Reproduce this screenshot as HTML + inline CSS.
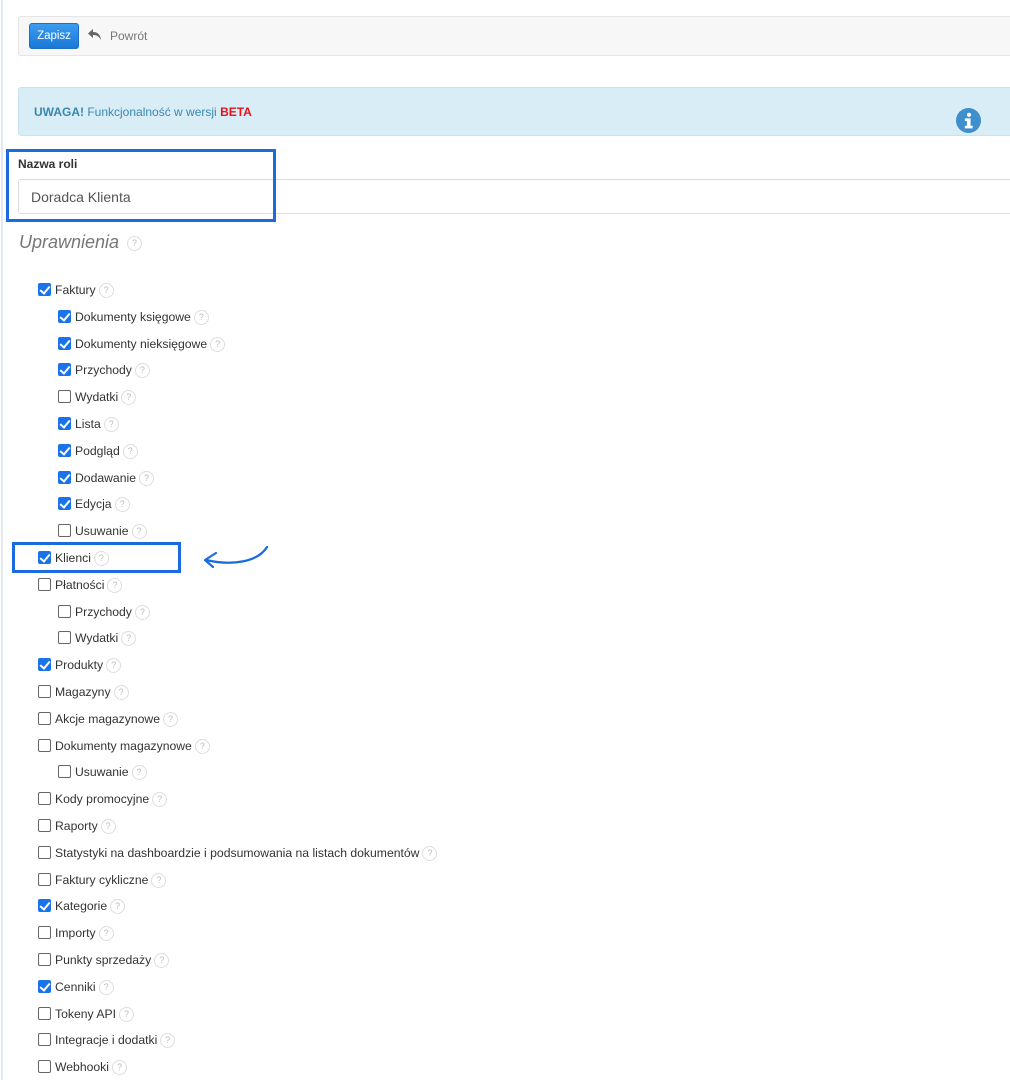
<!DOCTYPE html>
<html><head><meta charset="utf-8"><style>
*{box-sizing:border-box;margin:0;padding:0}
body{width:1010px;height:1080px;background:#fff;position:relative;overflow:hidden;font-family:"Liberation Sans",Arial,sans-serif;color:#333}
.lline{position:absolute;left:1px;top:0;width:2px;height:1080px;background:#e3e9f0}
.bar{position:absolute;left:18px;top:16px;width:1000px;height:40px;background:#f7f7f7;border:1px solid #e5e5e5;border-radius:3px}
.btn{position:absolute;left:29px;top:23px;width:50px;height:26px;border-radius:3px;background:linear-gradient(#3b9cf0,#1a78d6);border:1px solid #1b6fc4;color:#fff;font-size:11.5px;line-height:24px;text-align:center}
.back{position:absolute;left:110px;top:29px;font-size:12px;color:#777}
.alert{position:absolute;left:18px;top:87px;width:1000px;height:49px;background:#d9edf7;border:1px solid #c7e3f0;border-radius:3px;font-size:12px;color:#3a87ad}
.alert .t{position:absolute;left:15px;top:17px}
.name{position:absolute;left:6px;top:149px;width:270px;height:73px;border:3px solid #1a6be0;z-index:2}
.lbl{position:absolute;left:18px;top:157px;font-size:12px;font-weight:bold;color:#333}
.inp{position:absolute;left:18px;top:179px;width:1000px;height:35px;border:1px solid #ddd;border-radius:3px;font-size:14px;color:#555;padding:9px 12px}
.h{position:absolute;left:19px;top:232px;font-size:18px;font-style:italic;color:#777}
.q{display:inline-block;width:15px;height:15px;border:1px solid #ddd;border-radius:50%;font-size:9px;color:#bbb;text-align:center;line-height:13px;font-style:normal;vertical-align:middle;margin-left:3px}
.row{position:absolute;font-size:12.2px;color:#333;white-space:nowrap;height:16px;line-height:16px}
.cb{display:inline-block;width:13px;height:13px;border:1px solid #666;border-radius:2px;vertical-align:-2px;margin-right:4px;background:#fff}
.cb.on{background:#1a73e8;border-color:#1a73e8;position:relative}
.cb.on::after{content:"";position:absolute;left:3px;top:0px;width:4px;height:8px;border:solid #fff;border-width:0 2px 2px 0;transform:rotate(40deg)}
.kl{position:absolute;left:12px;top:542px;width:169px;height:31px;border:3px solid #1a6be0}
</style></head><body>
<div class="lline"></div>
<div class="bar"></div>
<div class="btn">Zapisz</div>
<svg style="position:absolute;left:87px;top:28px" width="16" height="14" viewBox="0 0 16 14"><path d="M6 1 L1 5.5 L6 10 L6 7 C10 7 12 8.5 14 12 C13.5 7 11 4 6 4 Z" fill="#666"/></svg>
<div class="back">Powrót</div>
<div class="alert"><div class="t"><b>UWAGA!</b> Funkcjonalność w wersji <b style="color:#e8121b">BETA</b></div>
<svg style="position:absolute;left:937px;top:20px" width="25" height="25" viewBox="0 0 24 24"><circle cx="12" cy="12" r="12" fill="#3e8fcc"/><circle cx="12.5" cy="6.5" r="2" fill="#fff"/><path d="M8.5 10h5.5v7h2v2.5h-7.5V17h2v-4.5h-2z" fill="#fff"/></svg></div>
<div class="name"></div>
<div class="lbl">Nazwa roli</div>
<div class="inp">Doradca Klienta</div>
<div class="h">Uprawnienia <span class="q">?</span></div>
<div class="kl"></div>
<svg style="position:absolute;left:195px;top:540px" width="80" height="35" viewBox="195 540 80 35"><path d="M267 547 C258 562 232 566 206 560" stroke="#1a6be0" stroke-width="2.2" fill="none" stroke-linecap="round"/><path d="M216 553 L205 560 L213 567" stroke="#1a6be0" stroke-width="2.2" fill="none" stroke-linecap="round" stroke-linejoin="round"/></svg>
<div id="rows"></div>
<script>
var d=[[1,1,"Faktury"],[2,1,"Dokumenty księgowe"],[2,1,"Dokumenty nieksięgowe"],[2,1,"Przychody"],[2,0,"Wydatki"],[2,1,"Lista"],[2,1,"Podgląd"],[2,1,"Dodawanie"],[2,1,"Edycja"],[2,0,"Usuwanie"],[1,1,"Klienci"],[1,0,"Płatności"],[2,0,"Przychody"],[2,0,"Wydatki"],[1,1,"Produkty"],[1,0,"Magazyny"],[1,0,"Akcje magazynowe"],[1,0,"Dokumenty magazynowe"],[2,0,"Usuwanie"],[1,0,"Kody promocyjne"],[1,0,"Raporty"],[1,0,"Statystyki na dashboardzie i podsumowania na listach dokumentów"],[1,0,"Faktury cykliczne"],[1,1,"Kategorie"],[1,0,"Importy"],[1,0,"Punkty sprzedaży"],[1,1,"Cenniki"],[1,0,"Tokeny API"],[1,0,"Integracje i dodatki"],[1,0,"Webhooki"]];
var h="";d.forEach(function(r,i){var y=Math.round(282+i*26.8);var x=r[0]==1?38:58;h+='<div class="row" style="left:'+x+'px;top:'+y+'px"><span class="cb'+(r[1]?' on':'')+'"></span>'+r[2]+'<span class="q">?</span></div>';});
document.getElementById("rows").innerHTML=h;
</script>
</body></html>
